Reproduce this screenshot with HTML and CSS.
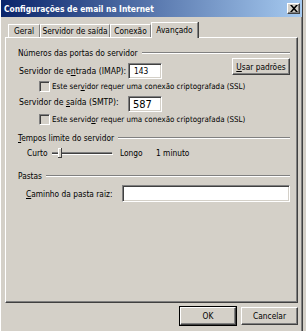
FILE: index.html
```html
<!DOCTYPE html>
<html>
<head>
<meta charset="utf-8">
<link rel="stylesheet" href="styles.css">
</head>
<body>
<div class="window">
  <div class="titlebar">
    <span class="title">Configurações de email na Internet</span>
    <span class="close"><svg width="8" height="7" viewBox="0 0 8 7"><path d="M0 0h2l2 2.3 2-2.3h2l-3 3.5 3 3.5h-2l-2-2.3-2 2.3h-2l3-3.5z" fill="#000"/></svg></span>
  </div>
  <div class="client">
    <div class="tabs">
      <div class="tab t1">Geral</div>
      <div class="tab t2">Servidor de saída</div>
      <div class="tab t3">Conexão</div>
      <div class="tab active t4">Avançado</div>
    </div>
    <div class="panel">
      <div class="group g1"><span class="glabel">Números das portas do servidor</span><span class="gline"></span></div>
      <div class="ports">
        <div class="lbl r1">Servidor de e<u>n</u>trada (IMAP):</div>
        <div class="field f1">143</div>
        <div class="btn usar"><u>U</u>sar padrões</div>
        <div class="check c1"><span class="box"></span>Este ser<u>v</u>idor requer uma conexão criptografada (SSL)</div>
        <div class="lbl r3">Servidor de&nbsp;<u>s</u>aída (SMTP):</div>
        <div class="field f2">587</div>
        <div class="check c2"><span class="box"></span>Este servid<u>o</u>r requer uma conexão criptografada (SSL)</div>
      </div>
      <div class="group g2"><span class="glabel"><u>T</u>empos limite do servidor</span><span class="gline"></span></div>
      <div class="slider-row">
        <span class="curto">Curto</span>
        <svg class="slider" width="62" height="14" viewBox="0 0 62 14">
          <rect x="0" y="6" width="60" height="1" fill="#808080"/>
          <rect x="0" y="7" width="60" height="1" fill="#404040"/>
          <rect x="0" y="8" width="61" height="1" fill="#ffffff"/>
          <rect x="6" y="2" width="4" height="10" fill="#404040"/>
          <rect x="6" y="2" width="3" height="9" fill="#ffffff"/>
          <rect x="7" y="3" width="2" height="8" fill="#d4d0c8"/>
        </svg>
        <span class="longo">Longo</span>
        <span class="minuto">1 minuto</span>
      </div>
      <div class="group g3"><span class="glabel">Pastas</span><span class="gline"></span></div>
      <div class="path-row">
        <span class="plabel"><u>C</u>aminho da pasta raiz:</span>
        <div class="field f3"></div>
      </div>
    </div>
    <div class="buttons">
      <div class="btn ok">OK</div>
      <div class="btn cancel">Cancelar</div>
    </div>
  </div>
</div>
</body>
</html>
```
FILE: styles.css
```css
* { box-sizing: border-box; }
html, body { margin: 0; padding: 0; }
body {
  width: 306px;
  height: 331px;
  background: #d4d0c8;
  font-family: "DejaVu Sans Condensed", "DejaVu Sans", sans-serif;
  font-stretch: condensed;
  font-size: 8.3px;
  color: #000;
  overflow: hidden;
}
u { text-decoration: underline; text-underline-offset: 1px; }
.window {
  width: 303px;
  height: 331px;
  border-left: 1px solid #ffffff;
  border-right: 1px solid #404040;
  box-shadow: inset -1px 0 #808080;
}
.titlebar {
  height: 17px;
  background: linear-gradient(to right, #0a246a, #a6caf0);
  display: flex;
  align-items: center;
  justify-content: space-between;
  padding: 0 2px 0 3px;
}
.title {
  color: #fff;
  font-weight: bold;
  font-size: 8.4px;
}
.close {
  width: 13px;
  height: 11px;
  background: #d4d0c8;
  border: 1px solid;
  border-color: #ffffff #404040 #404040 #ffffff;
  box-shadow: inset -1px -1px #808080;
  display: flex;
  align-items: center;
  justify-content: center;
}
.close svg { display: block; }
.client { padding: 5px 4px 0 4px; }
.tabs {
  display: flex;
  align-items: flex-end;
  height: 15px;
  padding-left: 3px;
  position: relative;
  z-index: 1;
}
.tab {
  height: 13px;
  display: flex;
  align-items: center;
  justify-content: center;
  border-top: 1px solid #ffffff;
  border-left: 1px solid #ffffff;
  border-right: 1px solid #808080;
  box-shadow: 1px 0 #404040;
  white-space: nowrap;
}
.t1 { width: 32px; }
.t2 { width: 70px; }
.t3 { width: 41px; }
.t4 { width: 47px; }
.tab.active {
  height: 16px;
  margin-bottom: -1px;
  background: #d4d0c8;
  padding-bottom: 2px;
}
.panel {
  width: 293px;
  height: 266px;
  border-top: 1px solid #ffffff;
  border-left: 1px solid #ffffff;
  border-right: 1px solid #404040;
  border-bottom: 1px solid #404040;
  box-shadow: inset -1px -1px #808080;
  padding: 0 7px 0 12px;
}
.group {
  display: flex;
  align-items: center;
  height: 14px;
}
.glabel { white-space: nowrap; padding-right: 4px; }
.gline {
  flex: 1;
  height: 2px;
  border-top: 1px solid #808080;
  border-bottom: 1px solid #ffffff;
}
.g1 { margin-top: 8px; }
.g2 { margin-top: 5px; }
.g3 { margin-top: 9px; }
.ports {
  margin-top: 2px;
  display: grid;
  grid-template-columns: 110px 34px 1fr 58px;
  grid-template-rows: 18px 12px 20px 14px;
}
.lbl { display: flex; align-items: center; white-space: nowrap; padding-left: 1px; }
.r1 { grid-row: 1; grid-column: 1; font-size: 8.6px; }
.r3 { grid-row: 3; grid-column: 1; font-size: 8.6px; }
.field {
  background: #ffffff;
  border: 1px solid;
  border-color: #808080 #ffffff #ffffff #808080;
  box-shadow: inset 1px 1px #404040, inset -1px -1px #d4d0c8;
  display: flex;
  align-items: center;
  padding-left: 5px;
}
.f1 { grid-row: 1; grid-column: 2; height: 16px; align-self: center; }
.f2 { grid-row: 3; grid-column: 2; height: 16px; align-self: end; font-size: 11px; padding-left: 4px; }
.btn {
  background: #d4d0c8;
  border: 1px solid;
  border-color: #ffffff #404040 #404040 #ffffff;
  box-shadow: inset -1px -1px #808080;
  display: flex;
  align-items: center;
  justify-content: center;
  white-space: nowrap;
}
.usar {
  grid-row: 1;
  grid-column: 4;
  align-self: start;
  margin-top: -4px;
  height: 17px;
}
.check {
  grid-column: 1 / span 4;
  display: flex;
  align-items: center;
  padding-left: 21px;
  white-space: nowrap;
  font-size: 7.9px;
}
.c1 { grid-row: 2; }
.c2 { grid-row: 4; }
.box {
  width: 11px;
  height: 11px;
  margin-right: 2px;
  border: 1px solid;
  border-color: #808080 #ffffff #ffffff #808080;
  box-shadow: inset 1px 1px #404040;
  background: #d4d0c8;
}
.slider-row {
  margin-top: 1px;
  height: 14px;
  display: flex;
  align-items: center;
  padding-left: 9px;
}
.curto { width: 25px; }
.slider { display: block; }
.longo { margin-left: 6px; width: 36px; }
.path-row {
  margin-top: 2px;
  height: 17px;
  display: flex;
  align-items: center;
  padding-left: 8px;
}
.plabel { width: 96px; white-space: nowrap; }
.f3 { width: 168px; height: 17px; }
.buttons {
  display: flex;
  justify-content: flex-end;
  gap: 5px;
  margin-top: 4px;
}
.ok {
  width: 56px;
  height: 18px;
  outline: 1px solid #000;
  outline-offset: 0;
  border-color: #ffffff #404040 #404040 #ffffff;
}
.cancel { width: 57px; height: 18px; }
```
